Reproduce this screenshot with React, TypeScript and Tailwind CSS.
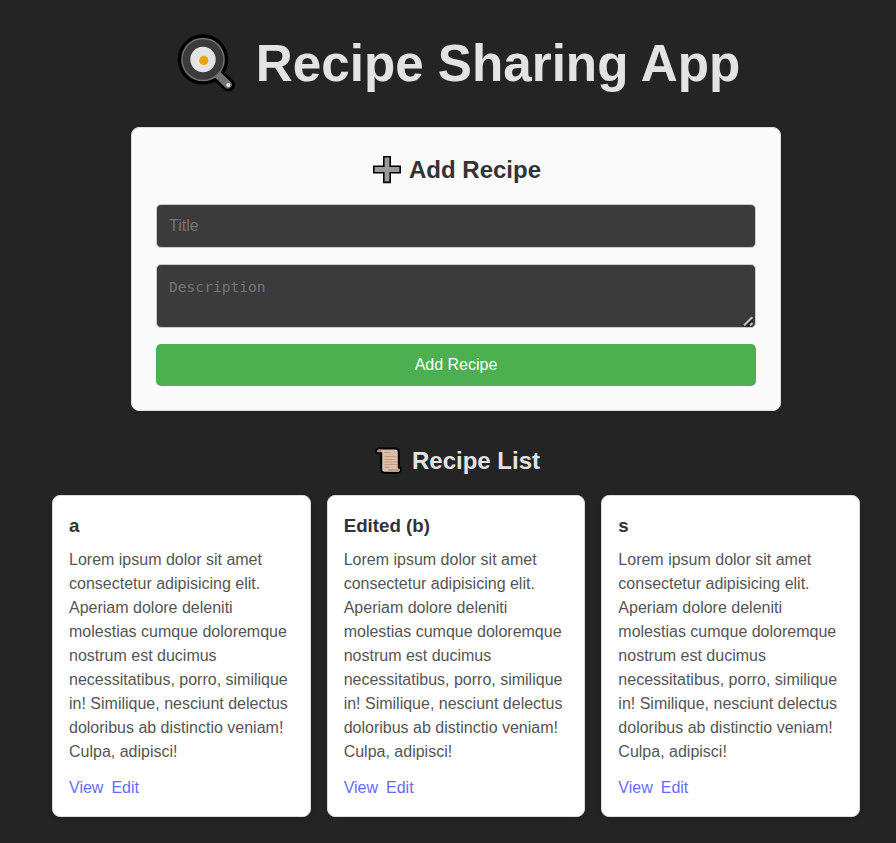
const text =
  'Lorem ipsum dolor sit amet consectetur adipisicing elit. Aperiam dolore deleniti molestias cumque doloremque nostrum est ducimus necessitatibus, porro, similique in! Similique, nesciunt delectus doloribus ab distinctio veniam! Culpa, adipisci!';

const recipes = [
  { title: 'a', description: text },
  { title: 'Edited (b)', description: text },
  { title: 's', description: text },
];

function PanIcon() {
  return (
    <svg className="-mt-0.5 h-[60px] w-[60px] shrink-0" viewBox="0 0 60 60" fill="none">
      <path d="M40 42L51.5 52" stroke="#000" strokeWidth="13" strokeLinecap="round" />
      <circle cx="26" cy="26.5" r="25.3" fill="#000" />
      <path d="M38.5 39.5L51 51.7" stroke="#727272" strokeWidth="7.5" strokeLinecap="round" />
      <circle cx="26" cy="26.5" r="21.8" fill="#727272" />
      <circle cx="26" cy="26.5" r="20.3" fill="#3b3b3b" />
      <circle cx="26" cy="26.5" r="12.7" fill="#e3e3e3" />
      <circle cx="26.8" cy="27.4" r="4.6" fill="#e3a50b" />
      <circle cx="51.3" cy="52" r="2" fill="#e3e3e3" />
    </svg>
  );
}

function PlusIcon() {
  return (
    <svg className="h-7 w-7 shrink-0" viewBox="0 0 28 28">
      <path
        d="M10.8 .8H17.2V10.3H27.2V16.7H17.2V26.4H10.8V16.7H.8V10.3H10.8Z"
        fill="#9b9b9b"
        stroke="#000"
        strokeWidth="1.6"
      />
    </svg>
  );
}

function ScrollIcon() {
  return (
    <svg className="h-7 w-7 shrink-0" viewBox="0 0 28 28">
      <path
        d="M3.2 1.5H20.5Q23.8 1.5 23.8 5V20.8H25.8Q26 25.8 22.5 25.8H9.5Q6.2 25.8 6.2 22V6H1.5Q1 2 3.2 1.5Z"
        fill="#dbbda9"
        stroke="#000"
        strokeWidth="2"
        strokeLinejoin="round"
      />
      <path d="M2 5.3Q2 2.3 4 2.3Q6.2 2.5 6.5 5.3Z" fill="#b98d70" />
      <path d="M11.5 24.9Q13.6 24.8 13.4 22H25Q25 24.9 22.5 24.9Z" fill="#c49c80" />
      <path d="M9.5 5.5H15.5M9.5 9.5H22M9.5 12.5H20M9.5 15H22M9.5 17.5H22M9.5 20.3H14" stroke="#c39c80" strokeWidth="1" />
    </svg>
  );
}

function ResizeGrip() {
  return (
    <svg className="pointer-events-none absolute right-[2px] bottom-[1px] h-3 w-3" viewBox="0 0 12 12" fill="none">
      <path d="M.5 10L10.5 0V11.5H1.5Z" fill="#1c1c1c" />
      <path d="M2 10.5L10.5 2M8 10.5L10.5 8" stroke="#c4c4c4" strokeWidth="2.2" />
    </svg>
  );
}

export default function App() {
  return (
    <div className="min-h-[843px] bg-[#242424] pt-[35px] pb-[26px] pl-[52px] pr-9 font-['Liberation_Sans',Arial,sans-serif] text-base leading-6 text-[#e3e3e3]">
      <h1 className="flex h-[57px] items-center justify-center pl-[5px] text-[51.2px] leading-[56px] font-bold">
        <PanIcon />
        <span className="ml-[19px] whitespace-nowrap">Recipe Sharing App</span>
      </h1>

      <form
        onSubmit={(e) => e.preventDefault()}
        className="mx-auto mt-[35px] w-[650px] rounded-lg border border-[#ddd] bg-[#fafafa] p-6 shadow-[0_2px_5px_rgba(0,0,0,0.1)]"
      >
        <h2 className="flex h-9 items-center justify-center gap-2 pl-0.5 text-2xl font-bold text-[#333]">
          <PlusIcon />
          Add Recipe
        </h2>
        <input
          type="text"
          placeholder="Title"
          className="mt-4 block h-11 w-full rounded-[5px] border border-[#ccc] bg-[#3b3b3b] px-3 pb-px text-base text-white placeholder:text-[#757575]"
        />
        <div className="relative mt-4">
          <textarea
            placeholder="Description"
            className="block h-16 w-full resize-none rounded-[5px] border border-[#ccc] bg-[#3b3b3b] px-3 py-3 font-['DejaVu_Sans_Mono',monospace] text-[14.6px] leading-[20px] text-white placeholder:text-[#757575]"
          />
          <ResizeGrip />
        </div>
        <button className="mt-4 block h-[42px] w-full rounded-[5px] bg-[#4caf50] text-base text-white">
          Add Recipe
        </button>
      </form>

      <h2 className="mt-8 flex h-9 items-center justify-center gap-[9px] pl-[3px] text-2xl font-bold">
        <ScrollIcon />
        Recipe List
      </h2>
      <div className="mt-4 grid grid-cols-3 gap-4">
        {recipes.map((r) => (
          <article
            key={r.title}
            className="h-[322px] rounded-lg border border-[#ddd] bg-white p-4 shadow-[0_2px_5px_rgba(0,0,0,0.1)]"
          >
            <h3 className="mb-2 text-[18.72px] leading-7 font-bold text-[#333]">{r.title}</h3>
            <p className="text-[#555]">{r.description}</p>
            <div className="mt-3 flex gap-2 text-[#646cff]">
              <a href="#view">View</a>
              <a href="#edit">Edit</a>
            </div>
          </article>
        ))}
      </div>
    </div>
  );
}
